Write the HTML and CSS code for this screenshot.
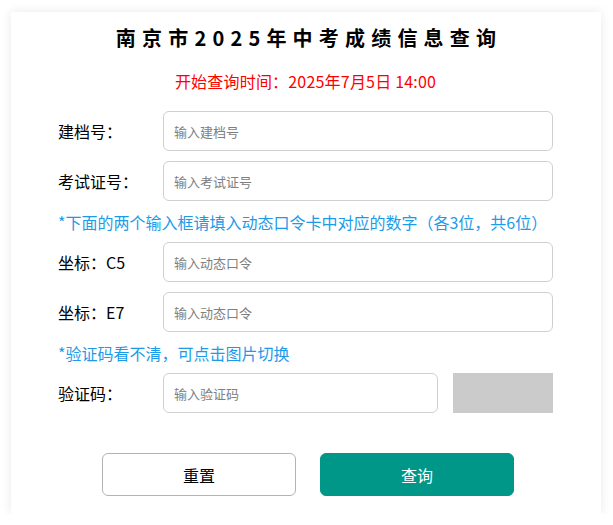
FILE: index.html
```html
<!DOCTYPE html>
<html lang="zh-CN">
<head>
<meta charset="utf-8">
<title>南京市2025年中考成绩信息查询</title>
<link rel="stylesheet" href="styles.css">
</head>
<body>
<div class="card">
  <h1 class="title">南京市2025年中考成绩信息查询</h1>
  <p class="start">开始查询时间：2025年7月5日 14:00</p>
  <form class="form">
    <div class="row">
      <label class="label">建档号：</label>
      <input class="input" type="text" placeholder="输入建档号">
    </div>
    <div class="row">
      <label class="label">考试证号：</label>
      <input class="input" type="text" placeholder="输入考试证号">
    </div>
    <p class="note">*下面的两个输入框请填入动态口令卡中对应的数字（各3位，共6位）</p>
    <div class="row">
      <label class="label">坐标：C5</label>
      <input class="input" type="text" placeholder="输入动态口令">
    </div>
    <div class="row">
      <label class="label">坐标：E7</label>
      <input class="input" type="text" placeholder="输入动态口令">
    </div>
    <p class="note">*验证码看不清，可点击图片切换</p>
    <div class="row row-last">
      <label class="label">验证码：</label>
      <input class="input input-captcha" type="text" placeholder="输入验证码">
      <div class="captcha"></div>
    </div>
    <div class="actions">
      <button type="button" class="btn btn-reset">重置</button>
      <button type="button" class="btn btn-query">查询</button>
    </div>
  </form>
</div>
</body>
</html>
```
FILE: styles.css
```css
* { box-sizing: border-box; }

html, body {
  margin: 0;
  padding: 0;
  background: #fff;
  font-family: "Noto Sans CJK SC", "Noto Sans", sans-serif;
  color: #000;
}

.card {
  margin: 12px 0 0 11px;
  width: 590px;
  height: 502px;
  padding: 11px 48px 0 47px;
  background: #fff;
  box-shadow: 0 0 10px rgba(0, 0, 0, 0.09);
}

.title {
  margin: 0;
  font-size: 20px;
  font-weight: 700;
  line-height: 30px;
  letter-spacing: 6.2px;
  text-align: center;
  padding-left: 7px;
}

.start {
  margin: 16px 0 0;
  font-size: 16px;
  line-height: 24px;
  letter-spacing: 0.2px;
  color: #ff0000;
  text-align: center;
}

.form {
  margin-top: 18px;
}

.row {
  display: flex;
  align-items: center;
  height: 40px;
  margin-bottom: 10px;
}

.row-last {
  margin-bottom: 0;
}

.label {
  width: 105px;
  flex: none;
  font-size: 16px;
  color: #000;
}

.input {
  flex: 1;
  height: 40px;
  border: 1px solid #d0d0d0;
  border-radius: 6px;
  padding: 0 10px;
  font-family: "Noto Sans CJK SC", "Noto Sans", sans-serif;
  font-size: 13px;
  color: #333;
  outline: none;
  background: #fff;
}

.input::placeholder {
  color: #808080;
}

.input-captcha {
  flex: none;
  width: 275px;
}

.captcha {
  width: 100px;
  height: 40px;
  margin-left: 15px;
  background: #cbcbcb;
}

.note {
  margin: 0 0 9px;
  font-size: 16px;
  line-height: 22px;
  color: #1b9be8;
}

.actions {
  display: flex;
  justify-content: center;
  gap: 24px;
  margin-top: 40px;
  padding-left: 5px;
}

.btn {
  width: 194px;
  height: 43px;
  border-radius: 6px;
  font-family: "Noto Sans CJK SC", "Noto Sans", sans-serif;
  font-size: 16px;
  cursor: pointer;
}

.btn-reset {
  background: #fff;
  border: 1px solid #b3b3b3;
  color: #000;
}

.btn-query {
  background: #009688;
  border: 1px solid #009688;
  color: #fff;
}
```
